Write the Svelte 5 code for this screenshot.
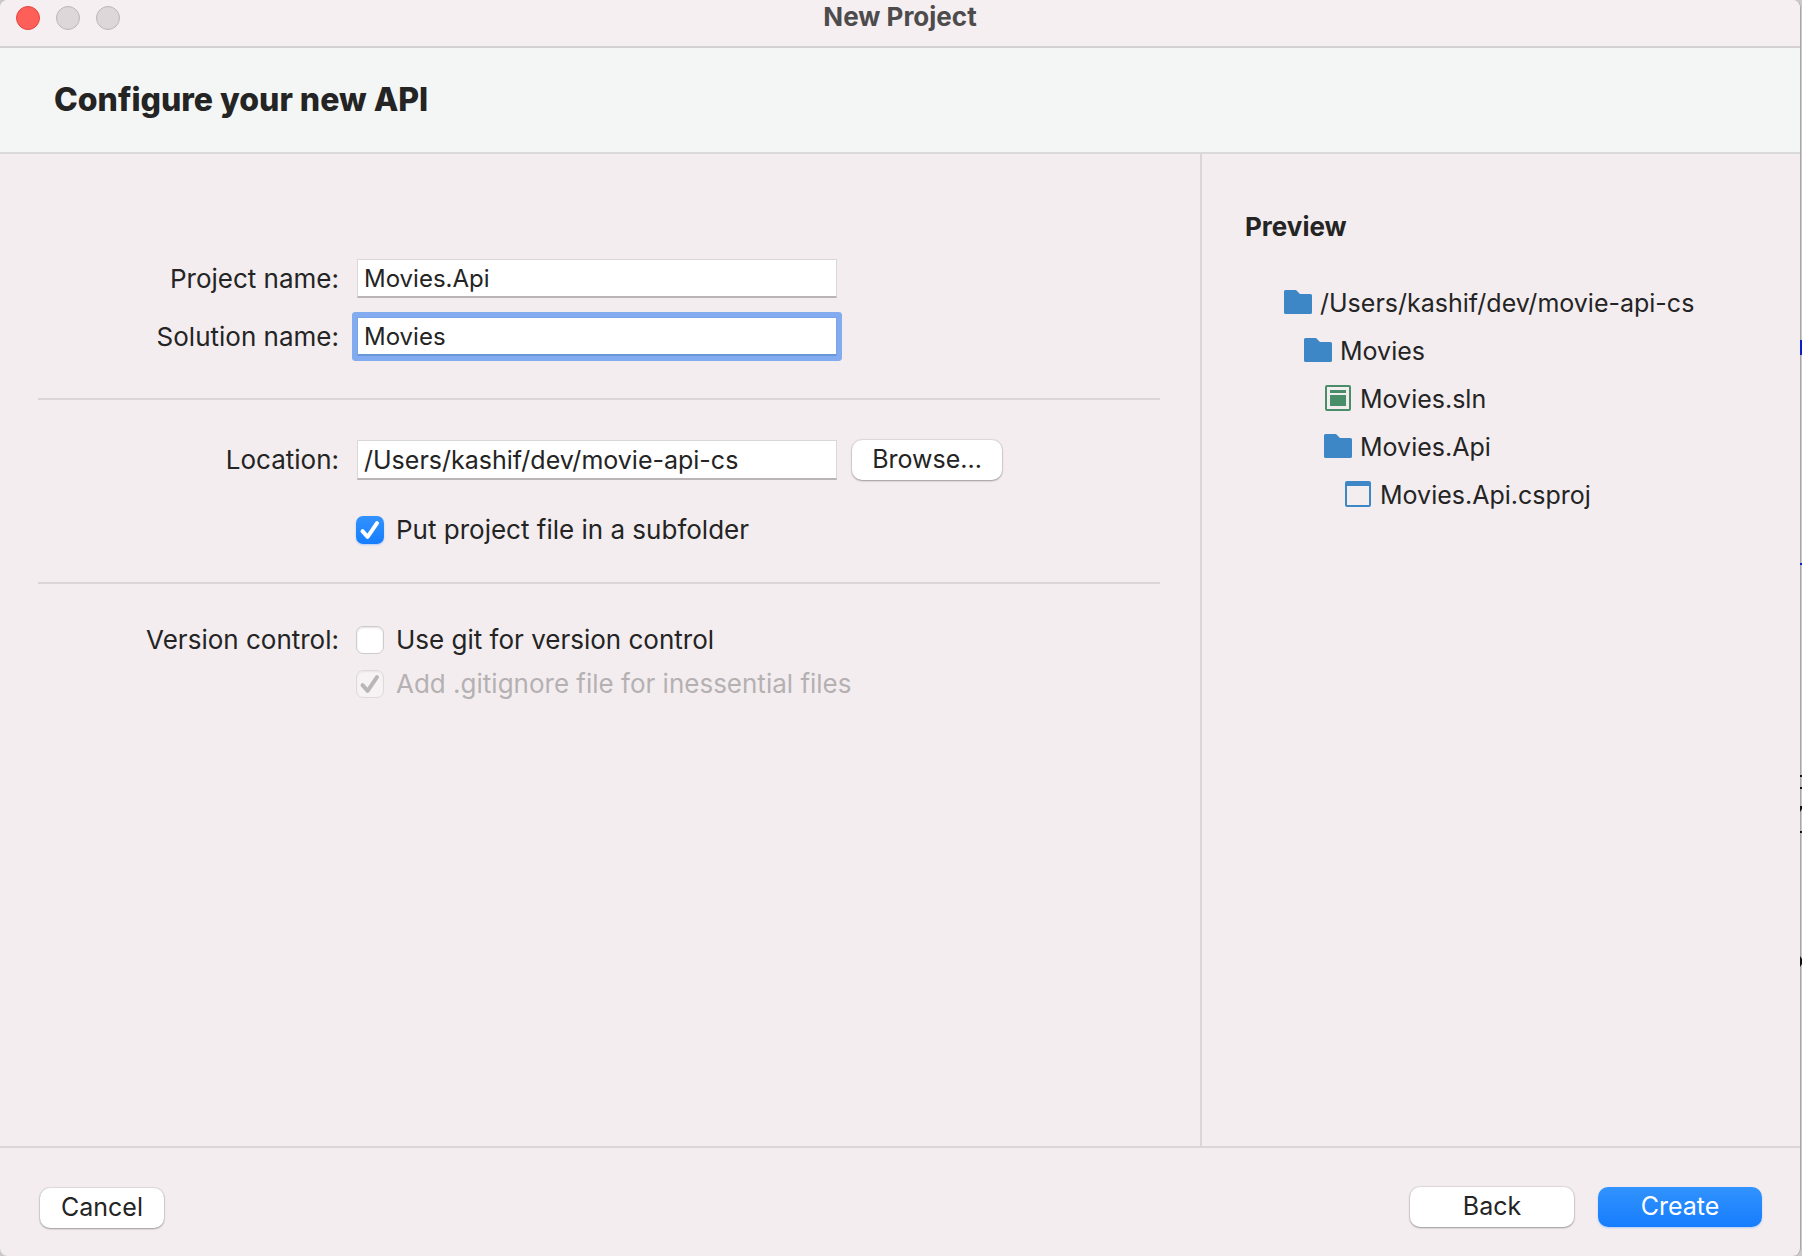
<script>
  let projectName = $state('Movies.Api');
  let solutionName = $state('Movies');
  let location = $state('/Users/kashif/dev/movie-api-cs');
  let subfolder = $state(true);
  let useGit = $state(false);
  let gitignore = $state(true);

  const tree = [
    { depth: 0, icon: 'folder', name: '/Users/kashif/dev/movie-api-cs' },
    { depth: 1, icon: 'folder', name: 'Movies' },
    { depth: 2, icon: 'solution', name: 'Movies.sln' },
    { depth: 2, icon: 'folder', name: 'Movies.Api' },
    { depth: 3, icon: 'project', name: 'Movies.Api.csproj' }
  ];
</script>

{#snippet check(color)}
  <svg class="mark" viewBox="0 0 28 28" aria-hidden="true">
    <path d="M6.5 15.2 L11.6 20.8 L21 7.2" fill="none" stroke={color} stroke-width="4" stroke-linecap="round" stroke-linejoin="round" />
  </svg>
{/snippet}

<div class="window">
  <header class="titlebar">
    <div class="lights">
      <button class="light close" aria-label="Close"></button>
      <button class="light" aria-label="Minimize"></button>
      <button class="light" aria-label="Zoom"></button>
    </div>
    <div class="title">New Project</div>
  </header>

  <div class="banner"><h1>Configure your new API</h1></div>

  <main>
    <form class="form" id="config" onsubmit={(e) => e.preventDefault()}>
      <section class="names">
        <div class="row">
          <label class="caption" for="project">Project name:</label>
          <input class="text" id="project" type="text" bind:value={projectName} />
        </div>
        <div class="row">
          <label class="caption" for="solution">Solution name:</label>
          <input class="text active" id="solution" type="text" bind:value={solutionName} />
        </div>
      </section>

      <section class="place">
        <div class="row">
          <label class="caption" for="location">Location:</label>
          <input class="text path" id="location" type="text" bind:value={location} />
          <button class="push browse" type="button">Browse...</button>
        </div>
        <div class="row">
          <span class="caption"></span>
          <label class="option">
            <span class="box"><input type="checkbox" bind:checked={subfolder} />{@render check('#fff')}</span>
            Put project file in a subfolder
          </label>
        </div>
      </section>

      <section class="version">
        <div class="row">
          <span class="caption">Version control:</span>
          <label class="option">
            <span class="box"><input type="checkbox" bind:checked={useGit} />{@render check('#fff')}</span>
            Use git for version control
          </label>
        </div>
        <div class="row">
          <span class="caption"></span>
          <label class="option off">
            <span class="box"><input type="checkbox" bind:checked={gitignore} disabled={!useGit} />{@render check('#b9b6b7')}</span>
            Add .gitignore file for inessential files
          </label>
        </div>
      </section>
    </form>

    <aside>
      <h2>Preview</h2>
      <ul>
        {#each tree as item}
          <li class="depth{item.depth}">
            <svg viewBox="0 1 28 28" aria-hidden="true">
              {#if item.icon === 'folder'}
                <path fill="#3d87c7" d="M1.5 2 H12 L16 6 H26.5 Q28 6 28 7.5 V24.5 Q28 26 26.5 26 H1.5 Q0 26 0 24.5 V3.5 Q0 2 1.5 2 Z" />
              {:else if item.icon === 'solution'}
                <rect x="2" y="2" width="24" height="24" rx="1" fill="none" stroke="#488f69" stroke-width="2" />
                <path fill="#488f69" d="M6 6 H22 V9 H6 Z M6 11 H22 V22 H6 Z" />
              {:else}
                <rect x="2" y="2" width="24" height="24" rx="1" fill="none" stroke="#3d87c7" stroke-width="2" />
                <path fill="#3d87c7" d="M2 2 H26 V6 H2 Z" />
              {/if}
            </svg>
            <span>{item.name}</span>
          </li>
        {/each}
      </ul>
    </aside>
  </main>

  <footer>
    <button class="push cancel" type="button">Cancel</button>
    <div class="actions">
      <button class="push wide" type="button">Back</button>
      <button class="push wide primary" type="submit" form="config">Create</button>
    </div>
  </footer>
</div>

<!-- sliver of the editor window lying behind the dialog -->
<svg class="behind" width="2" height="1256" aria-hidden="true">
  <path fill="#0a1fc4" d="M0 340 H2 V355 H0 Z M0 563 H2 V565 H0 Z" />
  <path fill="#111" d="M0 775 H2 V777 H0 Z M0 787 H2 V789 H0 Z M0 806 H2 V809 L0 812 Z M0 831 H2 V833 H0 Z M0 956 L2 959 V964 L0 967 Z" />
</svg>

<style>
  :global(body) {
    position: relative;
    background: #c9c9c9;
  }
  .window,
  .window * {
    box-sizing: border-box;
  }
  .window {
    display: flex;
    flex-direction: column;
    min-height: 100vh;
    margin-right: 1px;
    border-right: 1px solid #a9a7a8;
    border-radius: 8px;
    overflow: hidden;
    background: #f3edef;
    color: #242424;
    font: 25px/32px Inter, "Liberation Sans", sans-serif;
  }
  .behind {
    position: absolute;
    top: 0;
    right: 0;
  }
  button,
  input {
    font: inherit;
    color: inherit;
    margin: 0;
  }
  .titlebar {
    display: grid;
    grid-template-columns: 1fr auto 1fr;
    align-items: center;
    height: 48px;
    padding: 0 16px 10px;
    background: #f6eff2;
    border-bottom: 2px solid #d3d1d2;
  }
  .lights {
    display: flex;
    gap: 16px;
  }
  .light {
    width: 24px;
    height: 24px;
    padding: 0;
    border: 1px solid #bcb6b8;
    border-radius: 50%;
    background: #ddd7d9;
  }
  .close {
    background: #fe5f58;
    border-color: #e2463f;
  }
  .title {
    font-size: 26px;
    font-weight: 700;
    color: #4d4b4c;
    padding-bottom: 2px;
  }
  .banner {
    padding: 34px 54px;
    background: #f4f6f5;
    border-bottom: 2px solid #dadadb;
  }
  h1 {
    margin: 0;
    font-size: 32px;
    line-height: 36px;
    font-weight: 800;
  }
  main {
    flex: 1;
    display: grid;
    grid-template-columns: 2fr 1fr;
  }
  .form {
    padding: 105px 40px 0 38px;
  }
  section {
    display: flex;
    flex-direction: column;
  }
  .names {
    gap: 19px;
    padding-bottom: 42px;
    border-bottom: 2px solid #dad5d7;
  }
  .place {
    gap: 34px;
    padding: 40px 0 36px;
    border-bottom: 2px solid #dad5d7;
  }
  .version {
    gap: 12px;
    padding-top: 40px;
  }
  .row {
    display: flex;
    align-items: center;
  }
  .caption {
    width: 301px;
    margin-right: 18px;
    font-size: 26px;
    text-align: right;
    flex: none;
  }
  .text {
    width: 480px;
    height: 39px;
    padding: 0 6px;
    border: 1px solid #dbd6d8;
    border-bottom: 2px solid #b9b5b7;
    border-radius: 0;
    background: #fff;
    font-size: 24px;
    outline: none;
  }
  .path {
    height: 40px;
    font-size: 25px;
  }
  .active {
    border-color: #7ba5ea;
    border-bottom-color: #6a96da;
    box-shadow: 0 0 0 5px #82abf0;
    border-radius: 1px;
  }
  .push {
    height: 40px;
    padding: 0 20px 2px;
    border: 0;
    border-radius: 10px;
    background: #fff;
    box-shadow: 0 0 1px 1px rgb(0 0 0 / 8%), 0 1px 2px rgb(0 0 0 / 30%);
  }
  .browse {
    width: 150px;
    margin-left: 15px;
  }
  .cancel {
    width: 124px;
  }
  .option {
    display: flex;
    align-items: center;
    gap: 12px;
    font-size: 26px;
  }
  .off {
    color: #b5b1b2;
  }
  .box {
    display: grid;
    width: 28px;
    height: 28px;
    margin-left: -1px;
  }
  .box input,
  .mark {
    grid-area: 1 / 1;
    width: 28px;
    height: 28px;
  }
  .box input {
    appearance: none;
    border: 1px solid #cfcacc;
    border-radius: 7px;
    background: #fff;
    box-shadow: inset 0 1px 2px rgb(0 0 0 / 12%);
  }
  .box input:checked {
    border: 0;
    background: linear-gradient(#3293fd, #167dfe);
    box-shadow: 0 1px 2px rgb(22 125 254 / 30%);
  }
  .box input:disabled {
    border: 1px solid #dedadb;
    background: #f7f3f5;
    box-shadow: inset 0 1px 2px rgb(0 0 0 / 6%);
  }
  .mark {
    pointer-events: none;
    visibility: hidden;
  }
  .box input:checked + .mark {
    visibility: visible;
  }
  aside {
    padding: 57px 36px 0 43px;
    border-left: 2px solid #dad5d7;
  }
  h2 {
    margin: 0;
    font-size: 26px;
    line-height: 32px;
    font-weight: 700;
  }
  ul {
    list-style: none;
    margin: 36px 0 0;
    padding: 0 0 0 39px;
  }
  li {
    display: flex;
    align-items: center;
    gap: 8px;
    height: 48px;
    white-space: nowrap;
  }
  li svg {
    width: 28px;
    height: 28px;
    flex: none;
  }
  .depth1 {
    padding-left: 20px;
  }
  .depth2 {
    padding-left: 40px;
  }
  .depth3 {
    padding-left: 60px;
  }
  footer {
    display: flex;
    justify-content: space-between;
    align-items: center;
    height: 110px;
    padding: 12px 38px 0 40px;
    border-top: 2px solid #dad5d7;
  }
  .actions {
    display: flex;
    gap: 24px;
    padding-bottom: 2px;
  }
  .wide {
    width: 164px;
  }
  .primary {
    color: #fff;
    background: linear-gradient(#3293fd, #167dfe);
    box-shadow: 0 1px 2px rgb(22 125 254 / 30%);
  }
</style>
